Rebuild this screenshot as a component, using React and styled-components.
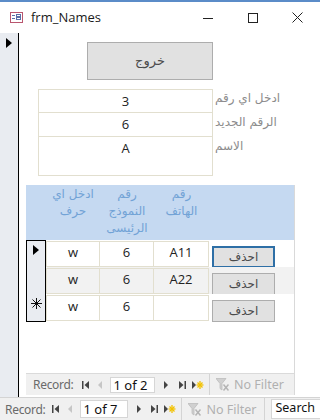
import styled, { createGlobalStyle } from "styled-components";

const GlobalStyle = createGlobalStyle`
  body {
    margin: 0;
    background: #ffffff;
    font-family: "Open Sans", "DejaVu Sans", sans-serif;
  }
`;

const Window = styled.div`
  width: 320px;
  height: 420px;
  display: flex;
  flex-direction: column;
  overflow: hidden;
  background: #ffffff;
`;

const TitleBar = styled.div`
  height: 31px;
  border-top: 2px solid #5b8cc8;
  display: flex;
  align-items: center;
  padding-left: 10px;
  font-size: 13px;
  color: #1a1a1a;
  background: #ffffff;
`;

const TitleText = styled.span`
  margin-left: 8px;
  flex: 1;
  padding-bottom: 2px;
`;

const WinButton = styled.div`
  width: 45px;
  height: 31px;
  display: flex;
  align-items: center;
  justify-content: center;
`;

const FormArea = styled.div`
  flex: 1;
  display: flex;
  min-height: 0;
`;

const Selector = styled.div`
  width: 18px;
  background: #e9ecf1;
  border-right: 1px solid #000;
  padding-top: 5px;
  display: flex;
  justify-content: center;
`;

const Body = styled.div`
  flex: 1;
  display: flex;
  flex-direction: column;
  padding-top: 9px;
`;

const ExitButton = styled.button`
  margin-left: 68px;
  width: 126px;
  height: 38px;
  background: #e1e1e1;
  border: 1px solid #adadad;
  font-family: "DejaVu Sans", sans-serif;
  font-size: 13px;
  color: #4a4a4a;
  padding: 0 0 2px;
`;

const Fields = styled.div`
  margin: 9px 0 0 19px;
  display: grid;
  grid-template-columns: 175px auto;
  grid-template-rows: 24px 24px 39px;
`;

const FieldBox = styled.div`
  border: 1px solid #e2dfcf;
  border-top-width: ${({ $first }) => ($first ? "1px" : "0")};
  text-align: center;
  font-size: 13px;
  color: #222;
  line-height: 20px;
  padding-top: 1px;
`;

const FieldLabel = styled.div`
  font-family: "DejaVu Sans", sans-serif;
  font-size: 12px;
  color: #8c8c8c;
  padding-left: 2px;
  padding-top: 2px;
  white-space: nowrap;
`;

const Subform = styled.div`
  margin: 9px 0 0 7px;
  width: 268px;
  height: 210px;
  border-right: 1px solid #d9d9d9;
  display: flex;
  flex-direction: column;
`;

const Header = styled.div`
  height: 55px;
  background: #c5d9f1;
  display: grid;
  grid-template-columns: 20px 54px 54px 55px 1fr;
`;

const HeadCell = styled.div`
  font-family: "DejaVu Sans", sans-serif;
  font-size: 12px;
  line-height: 17px;
  color: #72a3d6;
  text-align: center;
  padding-top: 1px;
  direction: rtl;
`;

const Row = styled.div`
  height: 27px;
  display: grid;
  grid-template-columns: 20px 54px 54px 55px 1fr;
  background: ${({ $alt }) => ($alt ? "#f2f2f2" : "#ffffff")};
`;

const RowSel = styled.div`
  border: 1px solid #000;
  border-top-width: ${({ $first }) => ($first ? "1px" : "0")};
  border-bottom-width: ${({ $last }) => ($last ? "1px" : "0")};
  background: #e9ecf1;
  display: flex;
  justify-content: center;
  padding-top: 4px;
`;

const Cell = styled.div`
  border: 1px solid #e2dfcf;
  border-left-width: ${({ $first }) => ($first ? "1px" : "0")};
  margin-top: 1px;
  margin-bottom: 1px;
  text-align: center;
  font-size: 13px;
  line-height: 20px;
  color: #222;
`;

const ButtonCell = styled.div`
  padding: 4px 0 0 3px;
`;

const DeleteButton = styled.button`
  width: 63px;
  height: 22px;
  background: #e1e1e1;
  border: ${({ $focus }) => ($focus ? "2px solid #2e6fa6" : "1px solid #adadad")};
  font-family: "DejaVu Sans", sans-serif;
  font-size: 12px;
  color: #4a4a4a;
  padding: 0;
`;

const Spacer = styled.div`
  flex: 1;
`;

const Nav = styled.div`
  height: ${({ $sub }) => ($sub ? "21px" : "22px")};
  background: #f0f0f0;
  border-top: 1px solid ${({ $sub }) => ($sub ? "#dadada" : "#d4d4d4")};
  display: flex;
  align-items: center;
  padding-left: ${({ $sub }) => ($sub ? "7px" : "5px")};
  font-family: "Noto Sans", sans-serif;
  font-size: 12px;
  letter-spacing: -0.3px;
  color: #6a6a6a;
  white-space: nowrap;
`;

const NavLabel = styled.span`
  margin-right: ${({ $sub }) => ($sub ? "9px" : "7px")};
`;

const NavIcon = styled.span`
  display: inline-flex;
  align-items: center;
  margin: 0 ${({ $gap }) => $gap}px 0 0;
`;

const RecordBox = styled.div`
  width: ${({ $sub }) => ($sub ? "49px" : "48px")};
  height: ${({ $sub }) => ($sub ? "16px" : "18px")};
  background: #fff;
  border: 1px solid #d6d6d6;
  color: #111;
  font-size: 13px;
  letter-spacing: 0;
  line-height: ${({ $sub }) => ($sub ? "14px" : "16px")};
  padding-left: 2px;
  margin-right: 9px;
  box-sizing: border-box;
`;

const FilterPart = styled.div`
  height: 100%;
  display: flex;
  align-items: center;
  border-left: 1px solid #d4d4d4;
  border-right: ${({ $sub }) => ($sub ? "0" : "1px solid #d4d4d4")};
  padding: 0 ${({ $sub }) => ($sub ? "10px" : "8px")} 0 6px;
  margin-left: 5px;
  color: #b0b0b0;
  font-size: 12.5px;
  letter-spacing: 0;
  gap: 5px;
`;

const SearchBox = styled.div`
  flex: 1;
  margin-left: 6px;
  height: 18px;
  background: #fff;
  border: 1px solid #d6d6d6;
  border-right: 0;
  color: #111;
  font-size: 12.5px;
  letter-spacing: 0;
  line-height: 16px;
  padding-left: 3px;
`;

function FormIcon() {
  return (
    <svg width="13" height="11" viewBox="0 0 13 11">
      <rect x="0.5" y="0.5" width="12" height="10" fill="#fff" stroke="#b9566f" />
      <line x1="2" y1="3.5" x2="5" y2="3.5" stroke="#5a6fa8" />
      <line x1="2" y1="6.5" x2="5" y2="6.5" stroke="#5a6fa8" />
      <rect x="6.5" y="2.5" width="4" height="2" fill="none" stroke="#5a6fa8" />
      <rect x="6.5" y="5.5" width="4" height="2" fill="none" stroke="#5a6fa8" />
    </svg>
  );
}

function Arrow({ size = 10 }) {
  return (
    <svg width={size * 0.6} height={size} viewBox="0 0 6 10">
      <polygon points="0,0 6,5 0,10" fill="#000" />
    </svg>
  );
}

function Asterisk() {
  return (
    <svg width="11" height="11" viewBox="0 0 11 11">
      <g stroke="#111" strokeWidth="1">
        <line x1="5.5" y1="0" x2="5.5" y2="11" />
        <line x1="0" y1="5.5" x2="11" y2="5.5" />
        <line x1="1.5" y1="1.5" x2="9.5" y2="9.5" />
        <line x1="9.5" y1="1.5" x2="1.5" y2="9.5" />
      </g>
    </svg>
  );
}

function NavFirst() {
  return (
    <svg width="7" height="8" viewBox="0 0 7 8">
      <rect x="0" y="0" width="1.5" height="8" fill="#444" />
      <polygon points="7,0 2.5,4 7,8" fill="#444" />
    </svg>
  );
}

function NavPrev() {
  return (
    <svg width="4" height="8" viewBox="0 0 4 8">
      <polygon points="4,0 0,4 4,8" fill="#c6c6c6" />
    </svg>
  );
}

function NavNext() {
  return (
    <svg width="4" height="8" viewBox="0 0 4 8">
      <polygon points="0,0 4,4 0,8" fill="#444" />
    </svg>
  );
}

function NavLast() {
  return (
    <svg width="7" height="8" viewBox="0 0 7 8">
      <polygon points="0,0 4.5,4 0,8" fill="#444" />
      <rect x="5.5" y="0" width="1.5" height="8" fill="#444" />
    </svg>
  );
}

function NavNew() {
  return (
    <svg width="12" height="10" viewBox="0 0 12 10">
      <polygon points="0,1 4,5 0,9" fill="#444" />
      <g stroke="#f2c200" strokeWidth="1.3">
        <line x1="8" y1="1" x2="8" y2="9" />
        <line x1="4.5" y1="5" x2="11.5" y2="5" />
        <line x1="5.5" y1="2.5" x2="10.5" y2="7.5" />
        <line x1="10.5" y1="2.5" x2="5.5" y2="7.5" />
      </g>
    </svg>
  );
}

function FilterIcon() {
  return (
    <svg width="13" height="13" viewBox="0 0 13 13">
      <polygon points="0,0.5 10,0.5 6,5.5 6,12 4,10.5 4,5.5" fill="#d0d0d0" stroke="#bcbcbc" strokeWidth="0.8" />
      <g stroke="#b4b4b4" strokeWidth="1.5">
        <line x1="7.5" y1="6.5" x2="12.5" y2="12.5" />
        <line x1="12.5" y1="6.5" x2="7.5" y2="12.5" />
      </g>
    </svg>
  );
}

function NavBar({ sub, text, search }) {
  return (
    <Nav $sub={sub}>
      <NavLabel $sub={sub}>Record:</NavLabel>
      <NavIcon $gap={9}><NavFirst /></NavIcon>
      <NavIcon $gap={8}><NavPrev /></NavIcon>
      <RecordBox $sub={sub}>{text}</RecordBox>
      <NavIcon $gap={sub ? 11 : 10}><NavNext /></NavIcon>
      <NavIcon $gap={6}><NavLast /></NavIcon>
      <NavIcon $gap={0}><NavNew /></NavIcon>
      <FilterPart $sub={sub}>
        <FilterIcon />
        <span>No Filter</span>
      </FilterPart>
      {search && <SearchBox>Search</SearchBox>}
    </Nav>
  );
}

const rows = [
  { a: "w", b: "6", c: "A11", sel: "arrow" },
  { a: "w", b: "6", c: "A22", sel: "" },
  { a: "w", b: "6", c: "", sel: "new" },
];

export default function App() {
  return (
    <Window>
      <GlobalStyle />
      <TitleBar>
        <FormIcon />
        <TitleText>frm_Names</TitleText>
        <WinButton>
          <svg width="10" height="10" viewBox="0 0 10 10">
            <line x1="0" y1="5.5" x2="10" y2="5.5" stroke="#222" />
          </svg>
        </WinButton>
        <WinButton>
          <svg width="10" height="10" viewBox="0 0 10 10">
            <rect x="0.5" y="0.5" width="9" height="9" fill="none" stroke="#222" />
          </svg>
        </WinButton>
        <WinButton>
          <svg width="11" height="11" viewBox="0 0 11 11">
            <line x1="0.5" y1="0.5" x2="10.5" y2="10.5" stroke="#222" />
            <line x1="10.5" y1="0.5" x2="0.5" y2="10.5" stroke="#222" />
          </svg>
        </WinButton>
      </TitleBar>

      <FormArea>
        <Selector>
          <Arrow />
        </Selector>
        <Body>
          <ExitButton>خروج</ExitButton>

          <Fields>
            <FieldBox $first>3</FieldBox>
            <FieldLabel>ادخل اي رقم</FieldLabel>
            <FieldBox>6</FieldBox>
            <FieldLabel>الرقم الجديد</FieldLabel>
            <FieldBox>A</FieldBox>
            <FieldLabel>الاسم</FieldLabel>
          </Fields>

          <Subform>
            <Header>
              <div />
              <HeadCell>ادخل اي حرف</HeadCell>
              <HeadCell>رقم النموذج الرئيسى</HeadCell>
              <HeadCell>رقم الهاتف</HeadCell>
              <div />
            </Header>
            {rows.map((r, i) => (
              <Row key={i} $alt={i === 1}>
                <RowSel $first={i === 0} $last={i === rows.length - 1}>
                  {r.sel === "arrow" && <Arrow />}
                  {r.sel === "new" && <Asterisk />}
                </RowSel>
                <Cell $first>{r.a}</Cell>
                <Cell>{r.b}</Cell>
                <Cell>{r.c}</Cell>
                <ButtonCell>
                  <DeleteButton $focus={i === 0}>احذف</DeleteButton>
                </ButtonCell>
              </Row>
            ))}
            <Spacer />
            <NavBar sub text="1 of 2" />
          </Subform>
          <Spacer />
        </Body>
      </FormArea>

      <NavBar text="1 of 7" search />
    </Window>
  );
}
